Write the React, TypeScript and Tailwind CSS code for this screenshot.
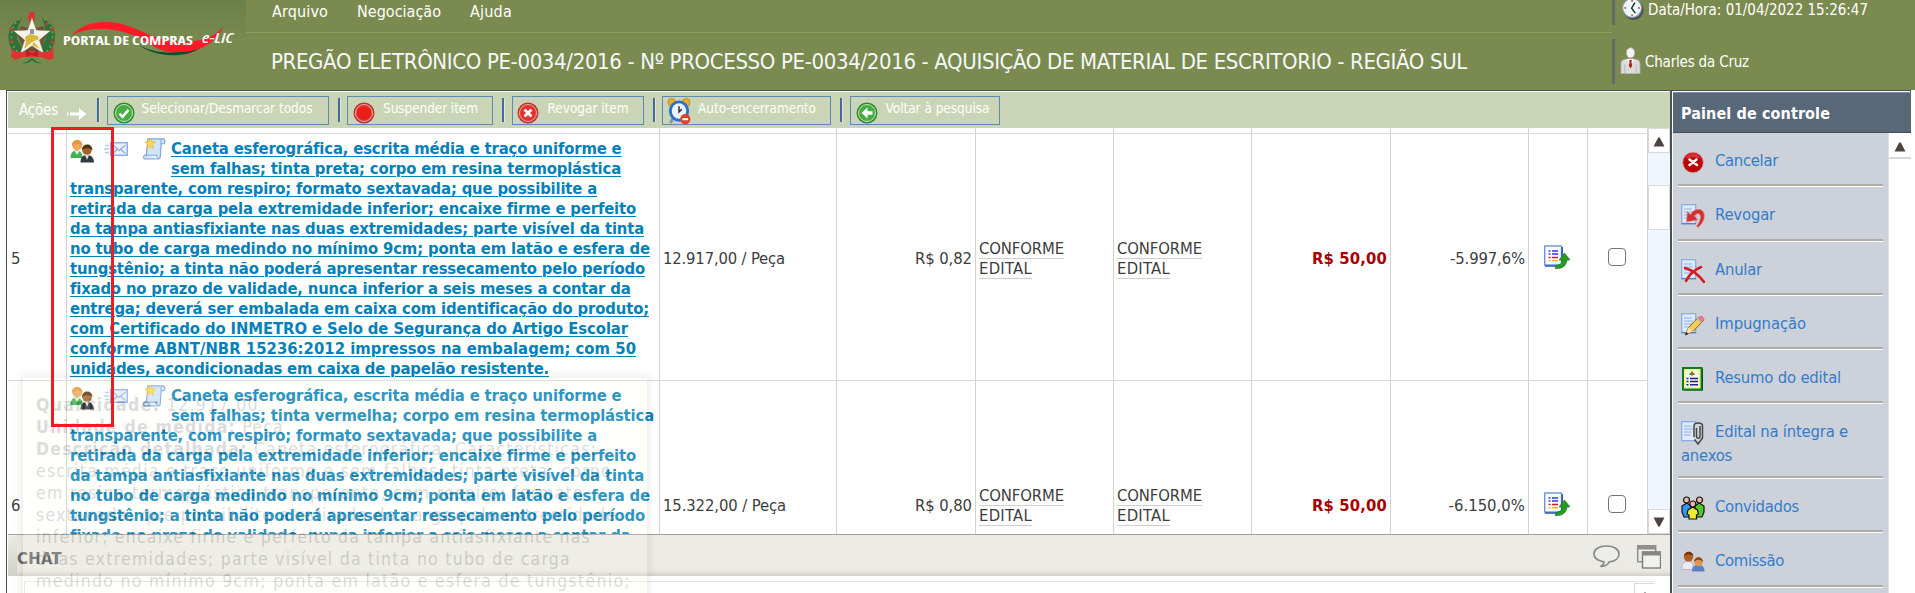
import { useLayoutEffect, useRef, useState, type ReactNode } from "react";
import { clsx } from "clsx";

/* Single line of text, tracked so that it fills a given width. */
function Fit({ w, className, children }: { w: number; className?: string; children: ReactNode }) {
  const ref = useRef<HTMLSpanElement>(null);
  const [spacing, setSpacing] = useState(0);
  useLayoutEffect(() => {
    const el = ref.current;
    if (!el) return;
    const natural = el.getBoundingClientRect().width;
    const count = (el.textContent ?? "").length;
    if (count > 0) setSpacing((w - natural) / count);
  }, [w]);
  return (
    <span ref={ref} style={{ letterSpacing: `${spacing}px` }} className={clsx("inline-block whitespace-pre", className)}>
      {children}
    </span>
  );
}

/* ---------- icons ---------- */

function Page() {
  return (
    <>
      <rect x="0.7" y="0.7" width="14" height="19" fill="#dfeafa" stroke="#86a8e2" strokeWidth="1.2" />
      <path d="M3 5h8M3 8h9M3 11h8M3 14h7" stroke="#8db0e6" strokeWidth="1" />
      <path d="M0.5 19.6h14.5" stroke="#5f80bd" strokeWidth="1.4" />
    </>
  );
}

function CancelIcon() {
  return (
    <svg viewBox="0 0 24 24" className="size-6">
      <circle cx="12" cy="12.5" r="10.3" fill="#bb0509" stroke="#dd9da4" strokeWidth="0.8" />
      <path d="M4 9a8.5 8.5 0 0 1 16 0c-5-2-11-2-16 0z" fill="#d9474b" opacity="0.7" />
      <path d="M8.500 9.500l7.500 5.500M15.500 9.500l-7 5.500" stroke="#fff" strokeWidth="2.500" strokeLinecap="round" />
    </svg>
  );
}
function RevokeIcon() {
  return (
    <svg viewBox="0 0 24 24" className="size-6">
      <Page />
      <path d="M5.500 18l.8-10.500 3 3C13.500 3.500 22.500 3.500 23.300 11c.4 5-2.300 9-6.300 12.500l-1.500-1.500c3.500-4 5.500-10.500 2.500-12-2-.8-3.700.6-4.500 2l3.300 4z" fill="#d42f30" stroke="#e98b89" strokeWidth="0.700" />
    </svg>
  );
}
function AnnulIcon() {
  return (
    <svg viewBox="0 0 24 24" className="size-6">
      <Page />
      <path d="M4 9c7 2 14 7 19 14M20 8C13 11 8 16 5 22" stroke="#cf1d20" strokeWidth="2.500" fill="none" strokeLinecap="round" />
    </svg>
  );
}
function PencilIcon() {
  return (
    <svg viewBox="0 0 24 24" className="size-6">
      <Page />
      <path d="M4.500 21.500l3-7L17 4.500l4.500 4L12 18.500z" fill="#f5cb54" stroke="#715520" strokeWidth="0.9" />
      <path d="M7.500 14.500l4.500 4-7.500 3z" fill="#f7e0ac" />
      <path d="M4 22.500l1.200-3.500 2.300 2z" fill="#222" />
      <path d="M15.500 6l2-2 4.500 4-2 2z" fill="#b8bdb8" />
      <path d="M17.500 4.500c2-2.500 6.500-.5 5 3.500l-1.300 1z" fill="#ee7f88" stroke="#c35261" strokeWidth="0.7" />
    </svg>
  );
}
function SummaryIcon() {
  return (
    <svg viewBox="0 0 24 24" className="size-6">
      <path d="M3 1.500h19v22H3z" fill="#0a2410" />
      <rect x="2" y="1" width="18.500" height="21.500" fill="#f4f6e2" stroke="#0b7d18" strokeWidth="2" />
      <rect x="4" y="3" width="14.500" height="17.500" fill="none" stroke="#f0e838" strokeWidth="1.200" strokeDasharray="2 1.500" />
      <path d="M8.500 7h5M11 4.500v4" stroke="#77801a" strokeWidth="2" />
      <path d="M5.500 11.500h2M9 11.500h8M5.500 14.500h2M9 14.500h8M5.500 17.800h2M9 17.800h8" stroke="#1d1d8c" strokeWidth="1.500" />
    </svg>
  );
}
function ClipIcon() {
  return (
    <svg viewBox="0 0 24 24" className="size-6">
      <rect x="0.7" y="0.7" width="14" height="19" fill="#dfeafa" stroke="#86a8e2" strokeWidth="1.200" />
      <path d="M3 5h8M3 8h9M3 11h8M3 14h7" stroke="#8db0e6" strokeWidth="1" />
      <path d="M13 2.500h7l2 3v12l-5 6-4.500-6z" fill="#d3d5d8" />
      <path d="M13 16V5c0-4 8.500-4 8.500 0v12L17 23l-3.500-4.500M19 5v10c0 3-3.500 3-3.500 0V7" fill="none" stroke="#444649" strokeWidth="1.500" />
    </svg>
  );
}
function GuestsIcon() {
  return (
    <svg viewBox="0 0 24 24" className="size-6">
      <g stroke="#111" strokeWidth="1.200">
        <path d="M1 10l5-3 4 3v11H3l-2-5z" fill="#3597ee" />
        <path d="M14 10l4-3 5 3v6l-2 5h-7z" fill="#54c92c" />
        <circle cx="5.500" cy="4" r="3" fill="#eeb9a4" />
        <circle cx="18.500" cy="4" r="3" fill="#eeb9a4" />
        <path d="M7 14l4.500-3 5 3 1 4-2 1v4H8v-4l-2-1z" fill="#efe93a" />
        <circle cx="11.800" cy="8" r="3" fill="#eeb9a4" />
      </g>
    </svg>
  );
}
function CommitteeIcon() {
  return (
    <svg viewBox="0 0 24 24" className="size-6">
      <path d="M1 19.500c-.5-6 1-8 6-8s5 3 5 8z" fill="#ececf0" stroke="#a5a8b2" strokeWidth="0.700" />
      <circle cx="7.500" cy="7" r="4.600" fill="#b35d22" />
      <path d="M3 6.500c0-6.500 9.500-6.500 9.500 0-3-3-6.500-3-9.500 0z" fill="#733208" />
      <path d="M11 21.500c0-5 2-6.500 6.500-6.500s6 2.500 6 6.500z" fill="#5b7fc8" />
      <circle cx="17.500" cy="12" r="4.200" fill="#dc9652" />
      <path d="M13 12c0-6.500 9-6.500 9 0-3-3-6-3-9 0z" fill="#8e4310" />
    </svg>
  );
}

function PeopleIcon() {
  return (
    <svg viewBox="0 0 24 24" className="h-6 w-6">
      <path d="M0.500 19c0-5 2-7.500 6-7.500s6 2.500 6 7.500z" fill="#3fb254" />
      <path d="M4.500 12h5l-2.500 4z" fill="#e3f4de" />
      <circle cx="7.300" cy="6.500" r="5" fill="#f0a85c" />
      <path d="M2 6.500C1.500-.8 12.500-.8 12.500 6.500c-3-2-7-2-10.500 0z" fill="#e8973f" />
      <path d="M10.500 23.500c0-5.500 2.500-7.500 6.500-7.500s7 2.500 7 7.500z" fill="#333a3d" />
      <path d="M15 16h4l-2 5z" fill="#dcdcdc" />
      <circle cx="17" cy="11" r="4.800" fill="#a1622e" />
      <path d="M12 11c0-7.500 10.500-7.500 10.500 0-3-2.500-7-2.500-10.500 0z" fill="#57300f" />
    </svg>
  );
}
function MailIcon() {
  return (
    <svg viewBox="0 0 24 16" className="h-4 w-6">
      <rect x="6.700" y="1.700" width="16.600" height="12.600" fill="#e6effb" stroke="#8fafe2" strokeWidth="1.600" />
      <path d="M9 4l6 5.500 6.500-5.500M9 12.500l4-4M21.500 12.500l-4.500-4" fill="none" stroke="#8eace0" strokeWidth="1.100" />
      <path d="M1 4.500h4M0 8h5M1 11.500h4" stroke="#b5c9ea" strokeWidth="1.300" />
    </svg>
  );
}
function ScrollIcon() {
  return (
    <svg viewBox="0 0 24 24" className="h-[23px] w-[23px]">
      <path d="M5 2h16c2 0 2.500 3 1 5h-3l-1 14c-.2 1.500-1 2-2.500 2H2c-1.500 0-1.800-2.500-.5-4H3.500z" fill="#cfe4fa" stroke="#7ba3dc" strokeWidth="1.200" />
      <path d="M2 19h12.500c0 2 0 3.500 1.500 4" fill="#eaf4ff" stroke="#7ba3dc" strokeWidth="1" />
      <path d="M19 7c-1-2-.5-4 1.500-5" fill="none" stroke="#7ba3dc" />
      <path d="M7.500 1l1.600 3.800 4 .3-3 2.700 1 4.200-3.600-2.300L4 12l1-4.200L2 5.100l4-.3z" fill="#ffd84c" stroke="#e5ab2b" strokeWidth="0.600" />
    </svg>
  );
}
function ListUpIcon() {
  return (
    <svg viewBox="0 0 26 24" className="h-6 w-[26px]">
      <rect x="0.700" y="1" width="16.800" height="19" fill="#fff" stroke="#6795dc" strokeWidth="1.400" />
      <path d="M18.200 2v19H1" fill="none" stroke="#2a56a8" strokeWidth="1.500" />
      <path d="M4.500 6h2M8 6h6M4.500 9h2M8 9h6" stroke="#2a3bef" strokeWidth="1.600" />
      <path d="M4.500 12.500h2M8 12.500h6" stroke="#e01515" strokeWidth="1.600" />
      <path d="M4.500 15.800h2M8 15.800h6" stroke="#e8bd2e" strokeWidth="1.600" />
      <path d="M20.500 8l5.500 7h-3c-.5 5-4 8.500-9.500 8.500H11l1.500-3.500c4 0 5.500-1.500 5.500-5h-3z" fill="#249b22" stroke="#176f18" strokeWidth="0.600" />
    </svg>
  );
}
function Badge({ kind }: { kind: "check" | "stop" | "x" | "back" }) {
  const green = kind === "check" || kind === "back";
  return (
    <svg viewBox="0 0 22 22" className="size-[22px] shrink-0">
      <circle cx="11" cy="11" r="10.500" fill={green ? "#2f8a2c" : "#b73431"} />
      <circle cx="11" cy="11" r="8.500" fill={green ? "#47ad42" : "#e2322c"} stroke={green ? "#c4e4bd" : "#f3aba6"} strokeWidth="1" />
      {kind === "check" && <path d="M6.500 11.500l3 3.300 6-7" fill="none" stroke="#fff" strokeWidth="2.600" />}
      {kind === "x" && <path d="M7.500 7.500l7 7M14.500 7.500l-7 7" stroke="#fff" strokeWidth="2.800" />}
      {kind === "back" && <path d="M11.500 5.500v3.800h5v3.400h-5v3.800L5.500 11z" fill="#fff" />}
      {kind === "stop" && <circle cx="11" cy="11" r="6.500" fill="#ea1d17" />}
    </svg>
  );
}
function AlarmIcon() {
  return (
    <svg viewBox="0 0 24 28" className="h-[27px] w-6 shrink-0">
      <circle cx="4.500" cy="4.500" r="4" fill="#f1ae27" stroke="#b17718" strokeWidth="0.700" />
      <circle cx="19.500" cy="4.500" r="4" fill="#f1ae27" stroke="#b17718" strokeWidth="0.700" />
      <path d="M6 21l-3 5" stroke="#8493a5" strokeWidth="3" />
      <ellipse cx="12" cy="13.500" rx="10.500" ry="11" fill="#2972c6" />
      <ellipse cx="12" cy="13.500" rx="7.500" ry="8" fill="#eef5fd" />
      <path d="M12 8.500v6l3-3" fill="none" stroke="#334" strokeWidth="1.600" />
      <circle cx="18.500" cy="22" r="5.300" fill="#e0421b" />
      <path d="M15.500 22h6" stroke="#fff" strokeWidth="2.200" />
    </svg>
  );
}
function ClockIcon() {
  return (
    <svg viewBox="0 0 24 26" className="h-[26px] w-[22px] shrink-0">
      <circle cx="12.500" cy="14" r="11" fill="#46525d" />
      <circle cx="11" cy="12" r="10.300" fill="#eef7f8" stroke="#8598a3" strokeWidth="1.200" />
      <path d="M11 3v2M11 19v2M2.500 12h2M17.500 12h2" stroke="#cf3b32" strokeWidth="1.700" />
      <path d="M14 6l-3.500 6 4 5.500" fill="none" stroke="#222c33" strokeWidth="1.600" />
    </svg>
  );
}
function PersonIcon() {
  return (
    <svg viewBox="0 0 22 28" className="h-[27px] w-[21px] shrink-0">
      <path d="M1 28V17c0-3 2-4 6-4.500h8c4 .5 6 1.500 6 4.500v11z" fill="#dcdcdc" stroke="#a8a8a8" strokeWidth="0.800" />
      <path d="M5 18v10M17 18v10" stroke="#b7b7b7" />
      <path d="M7 12.500l4 8 4-8z" fill="#fff" />
      <path d="M9.500 13.500h3l-.5 2 .8 4-1.800 3-1.800-3 .8-4z" fill="#a52a22" />
      <ellipse cx="11" cy="6" rx="4.300" ry="5.300" fill="#f3f3f3" stroke="#b5b5b5" strokeWidth="0.800" />
    </svg>
  );
}

function Logo() {
  return (
    <svg viewBox="0 0 246 90" className="h-[90px] w-[246px] shrink-0">
      <defs>
        <linearGradient id="logoBg" x1="0" y1="0" x2="0" y2="1">
          <stop offset="0" stopColor="#6b7f49" />
          <stop offset="0.450" stopColor="#788a4e" />
          <stop offset="1" stopColor="#7b8a4f" />
        </linearGradient>
      </defs>
      <rect width="246" height="90" fill="url(#logoBg)" />
      <path d="M72 35C82 23 103 19 122 24c22 6 32 16 50 17 22 2 41-1 52-15-8 17-24 26-44 27-22 1-32-13-50-19-21-7-41-7-58 1z" fill="#ff1a28" />
      <path d="M139 45c14 8 28 8 44 7 7-.5 13-2 17-4-8 6-20 8-32 7-13-1-23-5-29-10z" fill="#0c5030" />
      <g>
        <path d="M22 18c-9 3-14 11-13.500 20C9 47 13 53 21 57l3-6-7-12 1-12z" fill="#2c7339" />
        <path d="M42 18c9 3 13.500 11 13 20-.5 9-5 15-13 19l-3-6 7-12-1-12z" fill="#2c7339" />
        <path d="M20 19c-7 5-9 12-8.500 19 .5 7 3 11 7 15M44 19c7 5 9 12 8.500 19-.5 7-3 11-7 15" fill="none" stroke="#8f9c4d" strokeWidth="1.500" strokeDasharray="2 3" />
        <path d="M10 28l3 2M10 42l3-1M54 28l-3 2M54 43l-3-2M48 22l-2 3" stroke="#c83a35" strokeWidth="2.200" />
        <path d="M21 26l11 3 11-3 4 8-8 20H25l-8-20z" fill="#6f5237" />
        <path d="M29 22l-1-6 2-4h4l1 4-1 6z" fill="#e0302f" />
        <path d="M32 17l4.500 13 14.500.5-11.500 9.500 4.500 14-12-8-12 8 4.500-14L13 30.500l14.500-.5z" fill="#f6f4e6" stroke="#776c4a" strokeWidth="0.700" />
        <path d="M25 37l5-3 8 2 1 3-7 3-8 7 2-7zM34 42l6 7-8-4z" fill="#d9b83c" />
        <path d="M30 29h4v5h-4z" fill="#8296ad" />
        <path d="M10 47c3 4 8 6 13 5l9-1 9 1c5 1 10-1 13-5l-1 6 1 5-5 2-8-3H23l-8 3-4-3 1-5z" fill="#e03432" />
        <path d="M26 50l6 4 6-4v7l-6-2-6 2z" fill="#b8211f" />
        <path d="M22 63c5 0 8-4 10-5 2 1 5 5 10 5-5 1-8-1-10-3-2 2-5 4-10 3z" fill="#267036" />
      </g>
      <text x="63" y="45" textLength="130" lengthAdjust="spacingAndGlyphs" className="fill-white font-['Open_Sans',sans-serif] text-[12.5px] font-bold">PORTAL DE COMPRAS</text>
      <text x="202" y="43" textLength="31" lengthAdjust="spacingAndGlyphs" className="fill-white font-['Open_Sans',sans-serif] text-[14px] font-semibold italic">e-LIC</text>
    </svg>
  );
}

/* ---------- header ---------- */

function Header() {
  return (
    <header className="flex h-[90px] w-full bg-[#7b8a4f] text-white">
      <Logo />
      <div className="flex w-[1366px] flex-col">
        <nav className="flex h-8 items-start gap-[29px] pl-[26px] text-[16px] leading-[20px]">
          <Fit w={56} className="mt-[2px]">Arquivo</Fit>
          <Fit w={84} className="mt-[2px]">Negociação</Fit>
          <Fit w={42} className="mt-[2px]">Ajuda</Fit>
        </nav>
        <div className="border-t border-[#8b9d57] pl-[25px] pt-[14px] text-[22px] leading-[30px] text-[#f5f8fb]">
          <Fit w={1196}>PREGÃO ELETRÔNICO PE-0034/2016 - Nº PROCESSO PE-0034/2016 - AQUISIÇÃO DE MATERIAL DE ESCRITORIO - REGIÃO SUL</Fit>
        </div>
      </div>
      <div className="flex w-[303px] flex-col gap-[14px] text-[15px] leading-[20px]">
        <div className="flex h-[25px] gap-1 border-l-[3px] border-[#626c6b] pl-[7px]">
          <div className="-mt-[4px]"><ClockIcon /></div>
          <Fit w={220}>Data/Hora: 01/04/2022 15:26:47</Fit>
        </div>
        <div className="flex h-[45px] gap-1 border-l-[3px] border-[#626c6b] pl-[5px] pt-2">
          <PersonIcon />
          <Fit w={104} className="mt-[5px]">Charles da Cruz</Fit>
        </div>
      </div>
    </header>
  );
}

function Divider() {
  return <div className="h-6 w-[3px] border-r border-[#dce8d5] bg-[#436c9c]" />;
}

const TOOLS: { label: string; w: number; box: string; pad: string; gap: string; kind: "check" | "stop" | "x" | "alarm" | "back" }[] = [
  { label: "Selecionar/Desmarcar todos", w: 171, box: "w-[222px]", pad: "pl-[5px]", gap: "gap-[7px]", kind: "check" },
  { label: "Suspender item", w: 95, box: "w-[146px]", pad: "pl-[5px]", gap: "gap-[8px]", kind: "stop" },
  { label: "Revogar item", w: 81, box: "w-[132px]", pad: "pl-[4px]", gap: "gap-[9px]", kind: "x" },
  { label: "Auto-encerramento", w: 118, box: "w-[169px]", pad: "pl-[4px]", gap: "gap-[7px]", kind: "alarm" },
  { label: "Voltar à pesquisa", w: 104, box: "w-[150px]", pad: "pl-[5px]", gap: "gap-[8px]", kind: "back" },
];

function Toolbar() {
  return (
    <div className="flex h-9 items-center bg-[#cad5b7] pl-[11px] text-white">
      <Fit w={39} className="text-[15px] leading-[20px]">Ações</Fit>
      <svg viewBox="0 0 20 12" className="mr-[10px] ml-[9px] mt-2 h-3 w-5">
        <path d="M0 4.500h1.500v3H0zM3 4.500h9V0l7.500 6L12 12V7.500H3z" fill="#fff" />
      </svg>
      <div className="flex items-center gap-[9px]">
        {TOOLS.map((t) => (
          <div key={t.label} className="flex items-center gap-[6.500px]">
            <Divider />
            <button className={clsx("flex h-[29px] items-start border border-[#5c8cb4] text-[13.500px] leading-[18px]", t.box, t.pad, t.gap)}>
              <span className={t.kind === "alarm" ? "mt-[1px]" : "mt-[5px]"}>
                {t.kind === "alarm" ? <AlarmIcon /> : <Badge kind={t.kind} />}
              </span>
              <Fit w={t.w} className="mt-[2px] text-[#fdfffa]">{t.label}</Fit>
            </button>
          </div>
        ))}
      </div>
    </div>
  );
}

/* ---------- items table ---------- */

type Line = [string, number];
const BODY: Line[] = [
  ["transparente, com respiro; formato sextavada; que possibilite a", 527],
  ["retirada da carga pela extremidade inferior; encaixe firme e perfeito", 565.5],
  ["da tampa antiasfixiante nas duas extremidades; parte visível da tinta", 573.5],
  ["no tubo de carga medindo no mínimo 9cm; ponta em latão e esfera de", 580],
  ["tungstênio; a tinta não poderá apresentar ressecamento pelo período", 575],
  ["fixado no prazo de validade, nunca inferior a seis meses a contar da", 560],
  ["entrega; deverá ser embalada em caixa com identificação do produto;", 578.5],
  ["com Certificado do INMETRO e Selo de Segurança do Artigo Escolar", 557.5],
  ["conforme ABNT/NBR 15236:2012 impressos na embalagem; com 50", 566],
];
const LAST: Line = ["unidades, acondicionadas em caixa de papelão resistente.", 479];

interface Item {
  n: number;
  second: Line;
  qty: Line;
  price: string;
  pct: Line;
  hovered: boolean;
}
const ITEMS: Item[] = [
  { n: 5, second: ["sem falhas; tinta preta; corpo em resina termoplástica", 450], qty: ["12.917,00 / Peça", 122], price: "R$ 0,82", pct: ["-5.997,6%", 75], hovered: true },
  { n: 6, second: ["sem falhas; tinta vermelha; corpo em resina termoplástica", 483], qty: ["15.322,00 / Peça", 123], price: "R$ 0,80", pct: ["-6.150,0%", 76.5], hovered: false },
];

const GRID = "grid grid-cols-[59px_593px_177px_139px_138px_138px_139px_138px_59px_60px]";
const CELL = "flex h-full items-center border-r border-[#d3d3d1]";

function Conforme() {
  return (
    <div className="flex flex-col items-start pl-[3px] leading-[19px]">
      <Fit w={85} className="border-b border-[#cfcfcf]">CONFORME</Fit>
      <Fit w={53} className="border-b border-[#cfcfcf]">EDITAL</Fit>
    </div>
  );
}

function Row({ item }: { item: Item }) {
  return (
    <div className={clsx(GRID, "h-[247px] shrink-0 border-t border-[#d9d9d9]")}>
      <div className={clsx(CELL, "pt-[3px] pl-[3px]")}>{item.n}</div>
      <div className={clsx("h-full border-r border-[#d3d3d1] pl-[3px] pt-[5px] font-bold leading-[20px] text-[#0581b9]", item.hovered && "underline decoration-1 underline-offset-2")}>
        <div className="flex h-10">
          <div className="flex w-[101px] shrink-0 items-start">
            <PeopleIcon />
            <div className="mt-[2px] ml-[10px]"><MailIcon /></div>
            <div className="-mt-[2px] ml-[15px]"><ScrollIcon /></div>
          </div>
          <div className="flex flex-col items-start">
            <Fit w={450}>Caneta esferográfica, escrita média e traço uniforme e</Fit>
            <Fit w={item.second[1]}>{item.second[0]}</Fit>
          </div>
        </div>
        <div className="flex flex-col items-start">
          {[...BODY, LAST].map(([text, w]) => (
            <Fit key={text} w={w}>{text}</Fit>
          ))}
        </div>
      </div>
      <div className={clsx(CELL, "pt-[3px] pl-[3px]")}><Fit w={item.qty[1]}>{item.qty[0]}</Fit></div>
      <div className={clsx(CELL, "justify-end pt-[3px] pr-[3px]")}><Fit w={57}>{item.price}</Fit></div>
      <div className={clsx(CELL, "pt-[3px]")}><Conforme /></div>
      <div className={clsx(CELL, "pt-[3px]")}><Conforme /></div>
      <div className={clsx(CELL, "justify-end pt-[3px] pr-[3px] font-bold text-[#a80000]")}><Fit w={75}>R$ 50,00</Fit></div>
      <div className={clsx(CELL, "justify-end pt-[3px] pr-[3px]")}><Fit w={item.pct[1]}>{item.pct[0]}</Fit></div>
      <div className={clsx(CELL, "pl-[15px]")}><ListUpIcon /></div>
      <div className={clsx(CELL, "pl-[20px]")}>
        <span className="block h-[18px] w-[18px] rounded-[4px] border-[1.500px] border-[#757575] bg-white" />
      </div>
    </div>
  );
}

function Arrow({ down }: { down?: boolean }) {
  return (
    <svg viewBox="0 0 12 10" className="h-[10px] w-3">
      <path d={down ? "M0.500 0.500h11L6.800 9.500H5.200z" : "M0.500 9.500h11L6.800 0.500H5.200z"} fill="#4e4440" />
    </svg>
  );
}

function ItemsTable() {
  return (
    <div className="flex h-[406px] text-[16.500px] leading-[20px] text-[#3d3d3d]">
      <div className="w-[1640px] overflow-hidden">
        <div className={clsx(GRID, "h-[5px] overflow-hidden")}>
          <div className={CELL} />
          <div className="flex h-[5px] items-end overflow-hidden border-r border-[#d3d3d1] pl-[3px] font-bold leading-[20px] text-[#0581b9]">
            <Fit w={LAST[1]} className="mb-[3px]">{LAST[0]}</Fit>
          </div>
          {Array.from({ length: 8 }, (_, i) => <div key={i} className={CELL} />)}
        </div>
        {ITEMS.map((it) => <Row key={it.n} item={it} />)}
      </div>
      <div className="flex w-[22px] flex-col bg-[#eff6fe]">
        <div className="flex h-[25px] items-center justify-center border border-[#d9d9d9] bg-white pt-[2px]"><Arrow /></div>
        <div className="mt-[32px] h-[45px] border border-[#d9d9d9] bg-white" />
        <div className="mt-auto flex h-[25px] items-center justify-center border border-[#d9d9d9] bg-white"><Arrow down /></div>
      </div>
    </div>
  );
}

function Chat() {
  return (
    <div className="flex flex-col">
      <div className="flex h-[42px] items-start border-t border-[#a0a09e] bg-linear-to-b from-[#f4f4f1] via-[#ebeae5] to-[#d0cfca] from-0% via-5% to-100% pl-[9px]">
        <div className="flex h-full w-full items-start bg-linear-to-b from-[#ebeae5] from-85% to-transparent">
          <Fit w={45} className="mt-[14px] text-[16.500px] font-bold leading-[20px] text-[#6b6b69]">CHAT</Fit>
          <svg viewBox="0 0 27 23" className="mt-[10px] ml-[1531px] h-[23px] w-[27px] shrink-0">
            <path d="M13.500 1C6 1 1 4.500 1 9c0 3.500 3 6 7.500 7.300L11 17c0 2-1.500 3.500-3.500 4.500 5 0 7.500-2 8.500-4.500 6-.6 10-3.800 10-8 0-4.500-5-8-12.500-8z" fill="#ededeb" stroke="#8a8a88" strokeWidth="1.700" />
          </svg>
          <svg viewBox="0 0 24 24" className="mt-[10px] ml-[17px] h-6 w-6 shrink-0">
            <rect x="0.700" y="0.700" width="18" height="16" fill="#ecebe7" stroke="#8c8c8a" strokeWidth="1.400" />
            <rect x="0.500" y="0.500" width="18.500" height="4" fill="#8f8f8d" />
            <rect x="5.500" y="7" width="18" height="16" fill="#f1f1ef" stroke="#7c7c7a" strokeWidth="1.400" />
            <rect x="5" y="6.500" width="19" height="4" fill="#858583" />
          </svg>
        </div>
      </div>
      <div className="mt-[5px] ml-4 flex h-3 w-[1630px] border-t border-l border-[#e4e4e2] bg-white">
        <div className="ml-auto mt-px flex w-5 items-start justify-center border-t border-l border-[#dadada] pt-2"><Arrow /></div>
      </div>
    </div>
  );
}

/* ---------- control panel ---------- */

const PANEL: { label: string; w: number; more?: Line; h: string; icon: ReactNode }[] = [
  { label: "Cancelar", w: 63, h: "h-[54px]", icon: <CancelIcon /> },
  { label: "Revogar", w: 60, h: "h-[55px]", icon: <RevokeIcon /> },
  { label: "Anular", w: 47, h: "h-[54px]", icon: <AnnulIcon /> },
  { label: "Impugnação", w: 91, h: "h-[54px]", icon: <PencilIcon /> },
  { label: "Resumo do edital", w: 126, h: "h-[54px]", icon: <SummaryIcon /> },
  { label: "Edital na íntegra e", w: 133, more: ["anexos", 51], h: "h-[75px]", icon: <ClipIcon /> },
  { label: "Convidados", w: 84, h: "h-[54px]", icon: <GuestsIcon /> },
  { label: "Comissão", w: 69, h: "h-[55px]", icon: <CommitteeIcon /> },
];

function Panel() {
  return (
    <aside className="flex w-[238px] flex-col bg-[#cdd1d9]">
      <div className="flex h-[41px] items-start border-t border-t-[#7c8ba8] border-b border-b-[#444c56] bg-[#596878] pl-2 text-white">
        <Fit w={149} className="mt-[11px] text-[16px] font-bold leading-[20px]">Painel de controle</Fit>
      </div>
      <div className="flex grow">
        <ul className="w-[215px] pl-[5px] text-[16.500px] text-[#337ccb]">
          {PANEL.map((p) => (
            <li key={p.label} className={clsx("flex w-[205px] flex-col border-b-[1px] border-[#fff]", p.h)}>
              <div className="flex grow flex-col border-b-2 border-[#adaca6] pt-[17px] pl-[3px]">
                <div className="flex items-start gap-[10px]">
                  {p.icon}
                  <Fit w={p.w} className="mt-px leading-[20px]">{p.label}</Fit>
                </div>
                {p.more && <div className="mt-px leading-[20px]"><Fit w={p.more[1]}>{p.more[0]}</Fit></div>}
              </div>
            </li>
          ))}
        </ul>
        <div className="flex w-[23px] flex-col border-l border-[#e2e2e2] bg-white">
          <div className="flex h-[26px] items-center justify-center border-b-2 border-[#d9d9d9] pt-[3px]"><Arrow /></div>
        </div>
      </div>
    </aside>
  );
}

/* ---------- overlays ---------- */

function Tooltip() {
  const lines: Line[] = [
    ["escrita média e traço uniforme e sem falhas; tinta preta; corpo", 576],
    ["em resina termoplástica transparente, com respiro; formato", 548],
    ["sextavada; que possibilite a retirada da carga pela extremidade", 581],
    ["inferior; encaixe firme e perfeito da tampa antiasfixiante nas", 555],
    ["duas extremidades; parte visível da tinta no tubo de carga", 535],
    ["medindo no mínimo 9cm; ponta em latão e esfera de tungstênio;", 595],
  ];
  return (
    <div className="absolute top-[378px] left-[23px] flex h-[240px] w-[624px] flex-col items-start bg-[#fffff0] pt-[16px] pl-[13px] text-[17.500px] leading-[22px] text-[#333] opacity-[0.17] shadow-[0_0_6px_3px_rgba(0,0,0,0.350)] font-['DejaVu_Sans',sans-serif]">
      <Fit w={223}><b>Quantidade:</b> 12.917,00</Fit>
      <Fit w={248}><b>Unidade de medida:</b> Peça</Fit>
      <Fit w={561}><b>Descrição detalhada:</b> Caneta esferográfica. Características:</Fit>
      {lines.map(([t, w]) => <Fit key={t} w={w}>{t}</Fit>)}
    </div>
  );
}

export default function App() {
  return (
    <div className="relative h-[593px] w-[1915px] overflow-hidden bg-white font-['DejaVu_Sans_Condensed','DejaVu_Sans',sans-serif] [font-stretch:condensed]">
      <Header />
      <div className="ml-[6px] flex h-[503px] w-[1905px] border-t border-r border-l border-[#4a5058]">
        <main className="flex w-[1663px] flex-col pt-px pl-px">
          <Toolbar />
          <ItemsTable />
          <Chat />
        </main>
        <div className="flex border-l-2 border-[#4c5158] pt-px pl-px">
          <Panel />
        </div>
      </div>
      <Tooltip />
      <div className="absolute top-[127px] left-[51px] h-[300px] w-[63px] border-[3px] border-[#ee1b22]" />
    </div>
  );
}
